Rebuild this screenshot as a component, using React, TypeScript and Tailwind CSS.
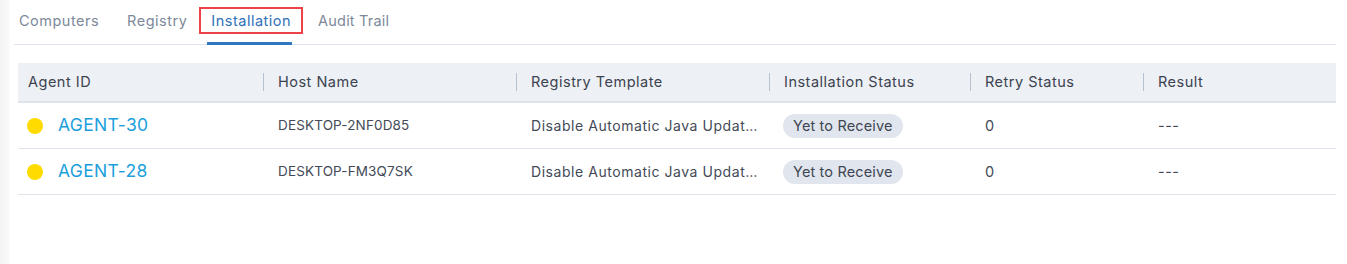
import React from "react";

const cols = [
  { label: "Agent ID", w: "w-[245px]" },
  { label: "Host Name", w: "w-[253px]" },
  { label: "Registry Template", w: "w-[253px]" },
  { label: "Installation Status", w: "w-[201px]" },
  { label: "Retry Status", w: "w-[173px]" },
  { label: "Result", w: "flex-1" },
];

const rows = [
  { id: "AGENT-30", host: "DESKTOP-2NF0D85" },
  { id: "AGENT-28", host: "DESKTOP-FM3Q7SK" },
];

export default function App() {
  return (
    <div
      className="w-[1347px] h-[264px] flex bg-white text-[#3f4654]"
      style={{ fontFamily: "Inter, 'Noto Sans', sans-serif" }}
    >
      <div className="w-[10px] h-full bg-gradient-to-r from-[#f3f3f3] to-[#fbfbfb]" />
      <div className="flex-1 pl-[4px] pr-[11px]">
        <div className="flex items-end h-[45px] border-b border-[#dfe5ee]">
          <div className="flex h-full items-stretch pl-[5px] text-[14.5px] tracking-[0.5px]">
            <div className="pt-[10px] text-[#7d899a]">Computers</div>
            <div className="ml-[28px] pt-[10px] text-[#7d899a]">Registry</div>
            <div className="ml-[12px] relative flex flex-col items-center">
              <div className="mt-[7px] h-[27px] px-[10px] border-2 border-[#ef4148] flex items-center text-[#2f71b8]">
                Installation
              </div>
              <div className="absolute bottom-[-1px] left-[8px] right-[11px] h-[3px] bg-[#2f78c0]" />
            </div>
            <div className="ml-[15px] pt-[10px] text-[#7d899a] tracking-[0.2px]">Audit Trail</div>
          </div>
        </div>

        <div className="mt-[18px] ml-[4px]">
          <div className="flex h-[40px] bg-[#edf0f5] border-b-2 border-[#dfe4ec] items-center">
            {cols.map((c, i) => (
              <div key={c.label} className={`${c.w} flex items-center h-full`}>
                {i > 0 && <div className="w-px h-[18px] bg-[#b6c2d2]" />}
                <div className={`${i > 0 ? "pl-[14px]" : "pl-[10px]"} text-[14.5px] tracking-[0.5px] text-[#3c4350]`}>
                  {c.label}
                </div>
              </div>
            ))}
          </div>
          {rows.map((r) => (
            <div key={r.id} className="flex h-[46px] items-center border-b border-[#dfe4ec] text-[13.5px] tracking-[0.15px] text-[#434a57]">
              <div className="w-[245px] flex items-center pl-[9px]">
                <span className="w-[16px] h-[16px] rounded-full bg-[#ffdb00]" />
                <span className="ml-[15px] text-[17.5px] tracking-[0.3px] text-[#1ba0dc]">{r.id}</span>
              </div>
              <div className="w-[253px] pl-[15px]">{r.host}</div>
              <div className="w-[253px] pl-[15px] whitespace-nowrap text-[14px] tracking-[0.55px] leading-[20px]">
                Disable Automatic Java Updat…
              </div>
              <div className="w-[201px] pl-[14px]">
                <span className="inline-flex items-center h-[24px] px-[10px] rounded-full bg-[#e1e6ee] text-[14.5px] tracking-[0.15px] text-[#3e4553]">
                  Yet to Receive
                </span>
              </div>
              <div className="w-[173px] pl-[15px] text-[14.5px]">0</div>
              <div className="flex-1 pl-[15px] text-[14.5px] tracking-[0.5px]">---</div>
            </div>
          ))}
        </div>
      </div>
    </div>
  );
}
